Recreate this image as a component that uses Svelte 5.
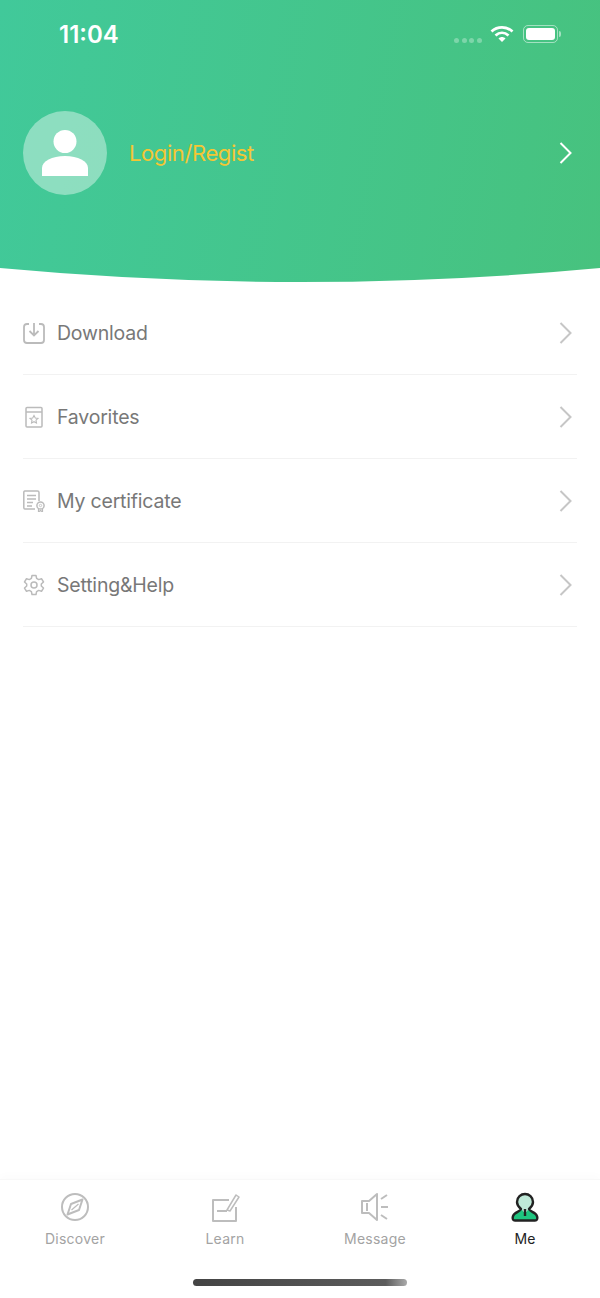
<script lang="ts">
  type Row = { label: string; icon: string };

  const rows: Row[] = [
    { label: "Download", icon: "download" },
    { label: "Favorites", icon: "favorites" },
    { label: "My certificate", icon: "certificate" },
    { label: "Setting&Help", icon: "setting" }
  ];

  const tabs = ["Discover", "Learn", "Message", "Me"];
</script>

<style>
  :global(body) {
    margin: 0;
    background: #fff;
  }

  .page {
    display: flex;
    flex-direction: column;
    width: 600px;
    height: 1298px;
    overflow: hidden;
    font-family: Inter, "Noto Sans", sans-serif;
  }

  .header {
    height: 282px;
    flex: none;
    background: linear-gradient(100deg, #41c99a, #47c27e);
    clip-path: path("M0 0H600V268Q300 296 0 268Z");
  }

  .status {
    display: flex;
    align-items: center;
    height: 68px;
    padding: 0 39px 0 59px;
    color: #fff;
  }

  .time {
    flex: 1;
    font-size: 24px;
    font-weight: 600;
  }

  .dots {
    display: flex;
    gap: 2.6px;
    margin: 12px 8px 0 0;
  }

  .dots i {
    width: 5px;
    height: 5px;
    border-radius: 50%;
    background: rgba(255, 255, 255, 0.3);
  }

  .battery {
    display: flex;
    align-items: center;
    margin-left: 9px;
  }

  .battery-body {
    width: 35px;
    height: 18px;
    box-sizing: border-box;
    padding: 2px;
    border: 1px solid rgba(255, 255, 255, 0.5);
    border-radius: 5px;
  }

  .battery-body b {
    display: block;
    height: 100%;
    border-radius: 3px;
    background: #fff;
  }

  .battery-cap {
    width: 2px;
    height: 6px;
    margin-left: 1px;
    border-radius: 0 2px 2px 0;
    background: rgba(255, 255, 255, 0.5);
  }

  .profile {
    display: flex;
    align-items: center;
    height: 84px;
    margin-top: 43px;
    padding: 0 28px 0 23px;
  }

  .avatar {
    display: flex;
    align-items: center;
    justify-content: center;
    width: 84px;
    height: 84px;
    border-radius: 50%;
    background: rgba(255, 255, 255, 0.4);
  }

  .login {
    flex: 1;
    margin-left: 22px;
    color: #f5c633;
    font-size: 22px;
    letter-spacing: -0.4px;
  }

  .menu {
    flex: 1;
    margin: 9px 23px 0;
  }

  .row {
    display: flex;
    align-items: center;
    height: 83px;
    border-bottom: 1px solid #f2f2f2;
    color: #787878;
    font-size: 19.5px;
    letter-spacing: -0.2px;
  }

  .row-icon {
    width: 22px;
    height: 22px;
    margin-right: 12px;
  }

  .row span {
    flex: 1;
  }

  .row .chev {
    margin-right: 5px;
  }

  .tabbar {
    display: grid;
    grid-template-columns: repeat(4, 150px);
    flex: none;
    height: 79px;
    padding-top: 12px;
    border-top: 1px solid #f8f8f8;
    box-shadow: 0 -4px 8px rgba(0, 0, 0, 0.015);
  }

  .tab {
    display: flex;
    flex-direction: column;
    align-items: center;
    color: #a3a3a3;
    font-size: 14px;
    letter-spacing: 0.25px;
  }

  .tab.active {
    color: #222;
    letter-spacing: 0;
  }

  .tab svg {
    margin-bottom: 8px;
  }

  .home {
    display: flex;
    flex: none;
    justify-content: center;
    height: 27px;
  }

  .home i {
    width: 214px;
    height: 7px;
    margin-top: 8px;
    border-radius: 4px;
    background: linear-gradient(90deg, #444, #5c5c5c 90%, #aaa);
  }
</style>

{#snippet chevron(color: string)}
  <svg class="chev" width="13" height="22" viewBox="0 0 13 22" fill="none" stroke={color} stroke-width="2">
    <path d="M1.500 1 11.500 11 1.500 21" />
  </svg>
{/snippet}

<div class="page">
  <header class="header">
    <div class="status">
      <div class="time">11:04</div>
      <div class="dots"><i></i><i></i><i></i><i></i></div>
      <svg width="24" height="18" viewBox="0 0 24 18" fill="none" stroke="#fff" stroke-width="2.800">
        <path d="M1.500 6.500C7.500 1 16.500 1 22.500 6.500" />
        <path d="M5.500 10.500C9.500 7 14.500 7 18.500 10.500" />
        <path d="M8.500 13.500 12 17l3.500-3.500C13.500 11.500 10.500 11.500 8.500 13.500Z" fill="#fff" stroke="none" />
      </svg>
      <div class="battery">
        <div class="battery-body"><b></b></div>
        <div class="battery-cap"></div>
      </div>
    </div>

    <div class="profile">
      <div class="avatar">
        <svg width="46" height="46" viewBox="0 0 46 46" fill="#fff">
          <circle cx="23" cy="11.500" r="11.500" />
          <path d="M0 46V38C0 31 10 26 23 26S46 31 46 38V46Z" />
        </svg>
      </div>
      <div class="login">Login/Regist</div>
      {@render chevron("#fff")}
    </div>
  </header>

  <div class="menu">
    {#each rows as row}
      <div class="row">
        <svg class="row-icon" viewBox="0 0 22 22" fill="none" stroke="#bbb" stroke-width="1.500">
          {#if row.icon === "download"}
            <path d="M6 2H4Q1 2 1 5V18Q1 21 4 21H18Q21 21 21 18V5Q21 2 18 2H16" stroke-width="1.800" />
            <path d="M11 1V13M6.500 9 11 13.500 15.500 9" stroke-width="1.800" />
          {:else if row.icon === "favorites"}
            <rect x="3" y="1.500" width="16" height="19.500" rx="1" />
            <path d="M3 6H19" />
            <path d="M11 9.500 12.300 12 15 12.400 13 14.200 13.500 17 11 15.700 8.500 17 9 14.200 7 12.400 9.700 12Z" stroke-width="1.100" />
          {:else if row.icon === "certificate"}
            <path d="M16 11V2.500Q16 1 14.500 1H1.800Q0.800 1 0.800 2.500V17.500Q0.800 19 1.800 19H12" />
            <path d="M4 5.500H13M4 9H13M4 12.500H10M4 16H9" />
            <circle cx="17.500" cy="15.500" r="3.600" />
            <circle cx="17.500" cy="15.500" r="1.200" stroke-width="0.800" />
            <path d="M15.500 18.500V22L17.500 20.500 19.500 22V18.500" stroke-width="1.200" />
          {:else}
            <path d="M9 1.500H13L13.600 4.400 15.700 5.600 18.500 4.700 20.500 8 18.300 10 18.300 12 20.500 14 18.500 17.300 15.700 16.400 13.600 17.600 13 20.500H9L8.400 17.600 6.300 16.400 3.500 17.300 1.500 14 3.700 12 3.700 10 1.500 8 3.500 4.700 6.300 5.600 8.400 4.400Z" stroke-linejoin="round" />
            <circle cx="11" cy="11" r="3" />
          {/if}
        </svg>
        <span>{row.label}</span>
        {@render chevron("#c6c6c6")}
      </div>
    {/each}
  </div>

  <nav class="tabbar">
    {#each tabs as tab}
      <div class="tab" class:active={tab === "Me"}>
        <svg width="30" height="30" viewBox="0 0 30 30" fill="none" stroke="#bdbdbd" stroke-width="2">
          {#if tab === "Discover"}
            <circle cx="15" cy="15" r="13" />
            <path d="M22.500 7.500 19 18 7.500 22.500 11 12Z" stroke-linejoin="round" />
            <path d="M11.500 18 18.500 12" stroke-width="1.200" />
          {:else if tab === "Learn"}
            <path d="M19 8H3V29H26V15" stroke-linejoin="round" />
            <path d="M17 18 26 3 29 5 20 19Z" stroke-width="1.500" stroke-linejoin="round" />
            <path d="M7 19H17" />
          {:else if tab === "Message"}
            <path d="M2 9H9L17 2V28L9 21H2Z" stroke-linejoin="round" />
            <path d="M7 11V19M21 7 27 3M21 15H28M21 23 27 27" />
          {:else}
            <path d="M10 19C10 17 7 15 7 10C7 5 11 2 15 2S23 5 23 10C23 15 20 17 20 19Z" fill="#bfe9d8" stroke="none" />
            <path d="M11 17 3 24V28H27V24L19 17 15 21Z" fill="#1fc47f" stroke="none" />
            <path d="M11 17C8.500 15 7 13 7 10C7 5 11 2 15 2S23 5 23 10C23 13 21.500 15 19 17C20 19 23 20 25 21.500C27 23 28 26 27 27.500 26.500 28.500 25.500 28.500 25 28.500H5C4.500 28.500 3.500 28.500 3 27.500 2 26 3 23 5 21.500 7 20 10 19 11 17Z" stroke="#222" stroke-width="2.400" stroke-linejoin="round" />
            <path d="M15 17V24" stroke="#222" stroke-width="2.400" />
          {/if}
        </svg>
        {tab}
      </div>
    {/each}
  </nav>

  <div class="home"><i></i></div>
</div>
